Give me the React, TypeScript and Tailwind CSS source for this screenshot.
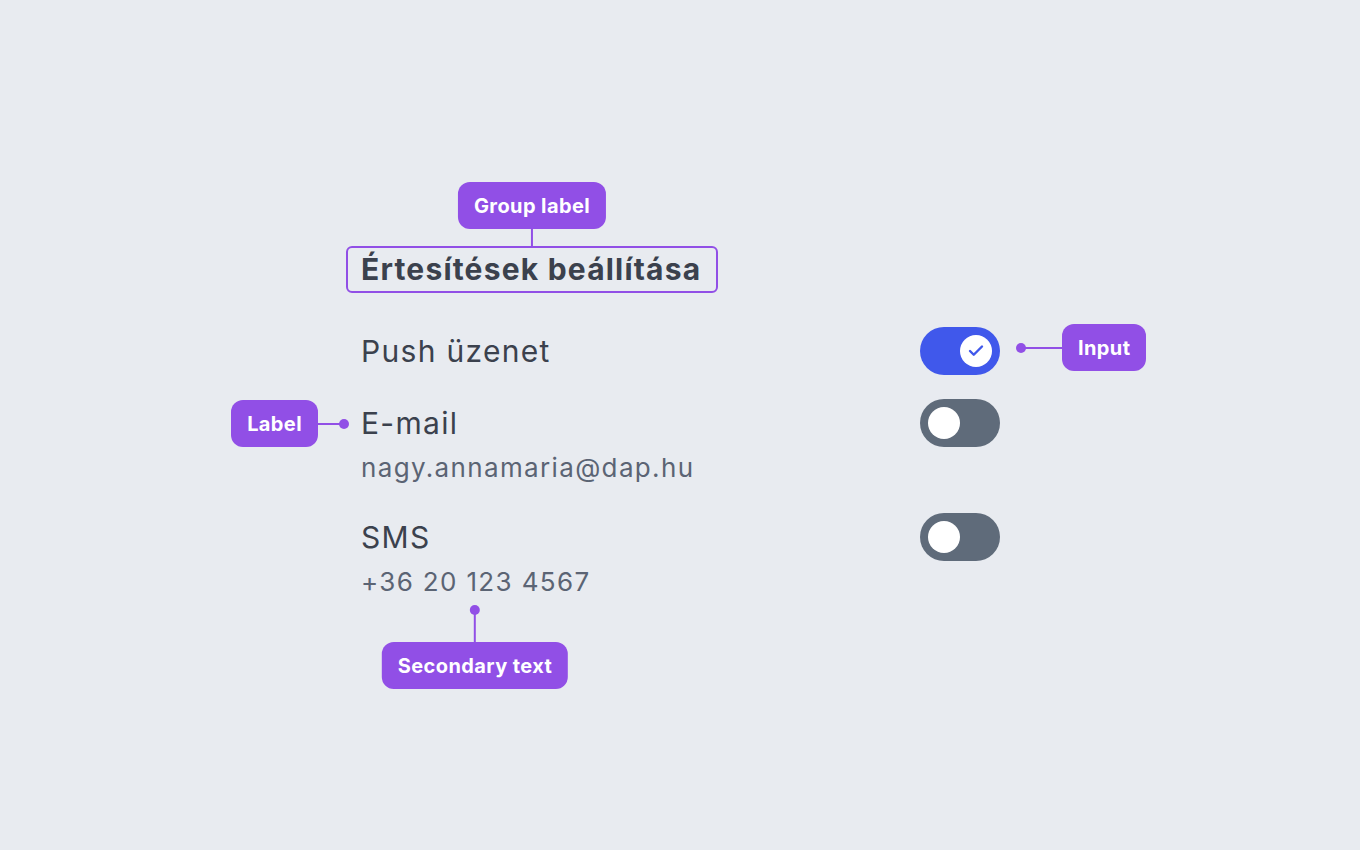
import { Check } from "lucide-react";

function Toggle({ on }: { on: boolean }) {
  return (
    <div
      className={
        on
          ? "flex h-12 w-20 shrink-0 items-center justify-end rounded-full bg-[#4058eb] px-2"
          : "flex h-12 w-20 shrink-0 items-center justify-start rounded-full bg-[#5f6b7a] px-2"
      }
    >
      <div className="flex h-8 w-8 items-center justify-center rounded-full bg-white">
        {on && <Check className="h-[18px] w-[18px] text-[#4058eb]" strokeWidth={3.2} />}
      </div>
    </div>
  );
}

function Tag({ text }: { text: string }) {
  return (
    <div className="flex h-[47px] items-center whitespace-nowrap rounded-xl bg-[#914fe6] px-4 text-[20px] font-bold tracking-[0.4px] text-white">
      {text}
    </div>
  );
}

interface RowProps {
  label: string;
  secondary?: string;
  on: boolean;
  labelTag?: boolean;
  inputTag?: boolean;
  secondaryTag?: boolean;
}

function Row({ label, secondary, on, labelTag, inputTag, secondaryTag }: RowProps) {
  return (
    <div className="flex items-start justify-between">
      <div className="flex flex-col">
        <div className="relative text-[30px] leading-[48px] tracking-[1.3px] text-[#3b414d]">
          {label}
          {labelTag && (
            <div className="absolute right-full top-[1px] mr-[12px] flex items-center">
              <Tag text="Label" />
              <div className="h-[2px] w-[24px] bg-[#914fe6]" />
              <div className="-ml-[3px] h-[10px] w-[10px] rounded-full bg-[#914fe6]" />
            </div>
          )}
        </div>
        {secondary && (
          <div className="relative text-[26px] leading-[42px] tracking-[1.35px] text-[#5b6474]">
            {secondary}
            {secondaryTag && (
              <div className="absolute left-[114px] top-full mt-[2px] flex -translate-x-1/2 flex-col items-center">
                <div className="h-[10px] w-[10px] rounded-full bg-[#914fe6]" />
                <div className="-mt-[2px] h-[29px] w-[2px] bg-[#914fe6]" />
                <Tag text="Secondary text" />
              </div>
            )}
          </div>
        )}
      </div>
      <div className="relative">
        <Toggle on={on} />
        {inputTag && (
          <div className="absolute left-full top-[-3px] ml-[16px] flex items-center">
            <div className="h-[10px] w-[10px] rounded-full bg-[#914fe6]" />
            <div className="-ml-[5px] h-[2px] w-[41px] bg-[#914fe6]" />
            <Tag text="Input" />
          </div>
        )}
      </div>
    </div>
  );
}

export default function App() {
  return (
    <div className="min-h-screen bg-[#e8ebf0] pl-[346px] pt-[246px] font-['Inter',sans-serif]">
      <div className="flex w-[654px] flex-col">
        <div className="relative self-start">
          <div className="absolute bottom-full left-[186px] flex -translate-x-1/2 flex-col items-center">
            <Tag text="Group label" />
            <div className="h-[17px] w-[2px] bg-[#914fe6]" />
          </div>
          <h2 className="rounded-md border-2 border-[#914fe6] pl-[13px] pr-[15px] text-[30px] font-bold leading-[43px] tracking-[1.2px] text-[#3b414d]">
            Értesítések beállítása
          </h2>
        </div>
        <div className="mt-[34px] flex flex-col gap-6 pl-[15px]">
          <Row label="Push üzenet" on inputTag />
          <Row label="E-mail" secondary="nagy.annamaria@dap.hu" on={false} labelTag />
          <Row label="SMS" secondary="+36 20 123 4567" on={false} secondaryTag />
        </div>
      </div>
    </div>
  );
}
